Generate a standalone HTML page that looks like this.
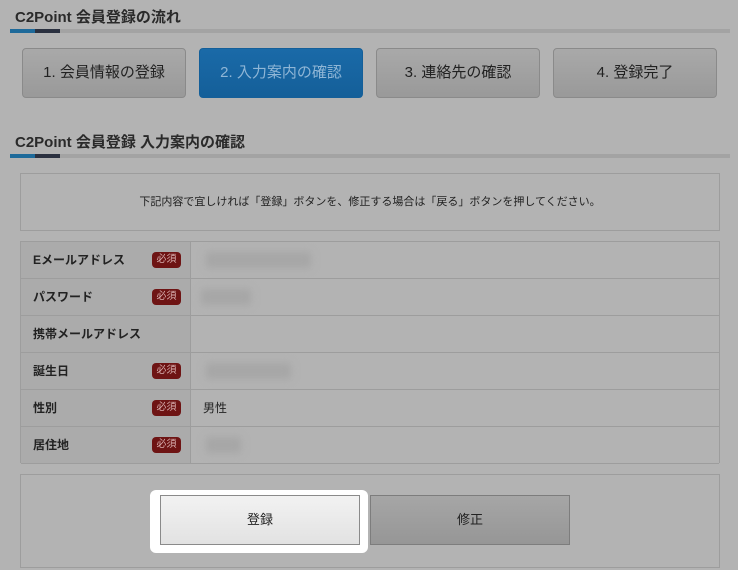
<!DOCTYPE html><html><head><meta charset="utf-8"><style>
body{margin:0;width:738px;height:570px;background:#b3b3b3;font-family:"Liberation Sans","Noto Sans CJK JP",sans-serif;position:relative;overflow:hidden;color:#222}
.a{position:absolute}
.h{font-size:15px;font-weight:bold;color:#2a2a2a}
.ul{height:4px;background:#a3a3a3;left:10px;right:8px}
.ul:before{content:"";position:absolute;left:0;width:25px;height:4px;background:#1e6a9a}
.ul:after{content:"";position:absolute;left:25px;width:25px;height:4px;background:#2b3140}
.st{top:48px;width:162px;height:48px;border:1px solid #8a8a8a;border-radius:4px;background:linear-gradient(#a9a9a9,#999);font-size:15px;color:#222;text-align:center;line-height:48px}
.st.on{background:linear-gradient(#1a6aa8,#145f99);border-color:#145f99;color:#8fb6d6}
.tb{left:20px;width:698px;border:1px solid #9d9d9d}
.r{position:absolute;left:0;right:0;height:36px;border-bottom:1px solid #9d9d9d}
.l{position:absolute;left:0;width:170px;height:36px;background:#ababab;border-right:1px solid #9d9d9d;font-size:12px;font-weight:bold;line-height:36px;padding-left:12px;box-sizing:border-box}
.req{position:absolute;left:131px;top:10px;width:29px;height:16px;background:#6e1414;border-radius:4px;color:#d9b0b0;font-size:10px;line-height:16px;text-align:center;font-weight:normal}
.v{position:absolute;left:182px;font-size:12px;line-height:36px}
.bl{position:absolute;top:10px;height:16px;background:#a6a6a6;filter:blur(4px)}
</style></head><body>
<div class="a h" style="left:15px;top:6px">C2Point 会員登録の流れ</div>
<div class="a ul" style="top:29px"></div>
<div class="a st" style="left:22px">1. 会員情報の登録</div>
<div class="a st on" style="left:199px">2. 入力案内の確認</div>
<div class="a st" style="left:376px">3. 連絡先の確認</div>
<div class="a st" style="left:553px">4. 登録完了</div>
<div class="a h" style="left:15px;top:131px">C2Point 会員登録 入力案内の確認</div>
<div class="a ul" style="top:154px"></div>
<div class="a tb" style="top:173px;height:56px;font-size:11px;text-align:center;line-height:56px">下記内容で宜しければ「登録」ボタンを、修正する場合は「戻る」ボタンを押してください。</div>
<div class="a tb" style="top:241px;height:221px;border-bottom:none">
<div class="r" style="top:0"><div class="l">Eメールアドレス<span class="req">必須</span></div><div class="bl" style="left:185px;width:105px"></div></div>
<div class="r" style="top:37px"><div class="l">パスワード<span class="req">必須</span></div><div class="bl" style="left:180px;width:50px"></div></div>
<div class="r" style="top:74px"><div class="l">携帯メールアドレス</div></div>
<div class="r" style="top:111px"><div class="l">誕生日<span class="req">必須</span></div><div class="bl" style="left:185px;width:85px"></div></div>
<div class="r" style="top:148px"><div class="l">性別<span class="req">必須</span></div><div class="v">男性</div></div>
<div class="r" style="top:185px"><div class="l">居住地<span class="req">必須</span></div><div class="bl" style="left:185px;width:35px"></div></div>
</div>
<div class="a tb" style="top:474px;height:92px"></div>
<div class="a" style="left:150px;top:490px;width:218px;height:63px;background:#fff;border-radius:6px"></div>
<div class="a" style="left:160px;top:495px;width:198px;height:48px;border:1px solid #8a8a8a;background:linear-gradient(#f2f2f2,#e2e2e2);font-size:13px;text-align:center;line-height:48px">登録</div>
<div class="a" style="left:370px;top:495px;width:198px;height:48px;border:1px solid #7d7d7d;background:linear-gradient(#a6a6a6,#969696);font-size:13px;text-align:center;line-height:48px">修正</div>
</body></html>
